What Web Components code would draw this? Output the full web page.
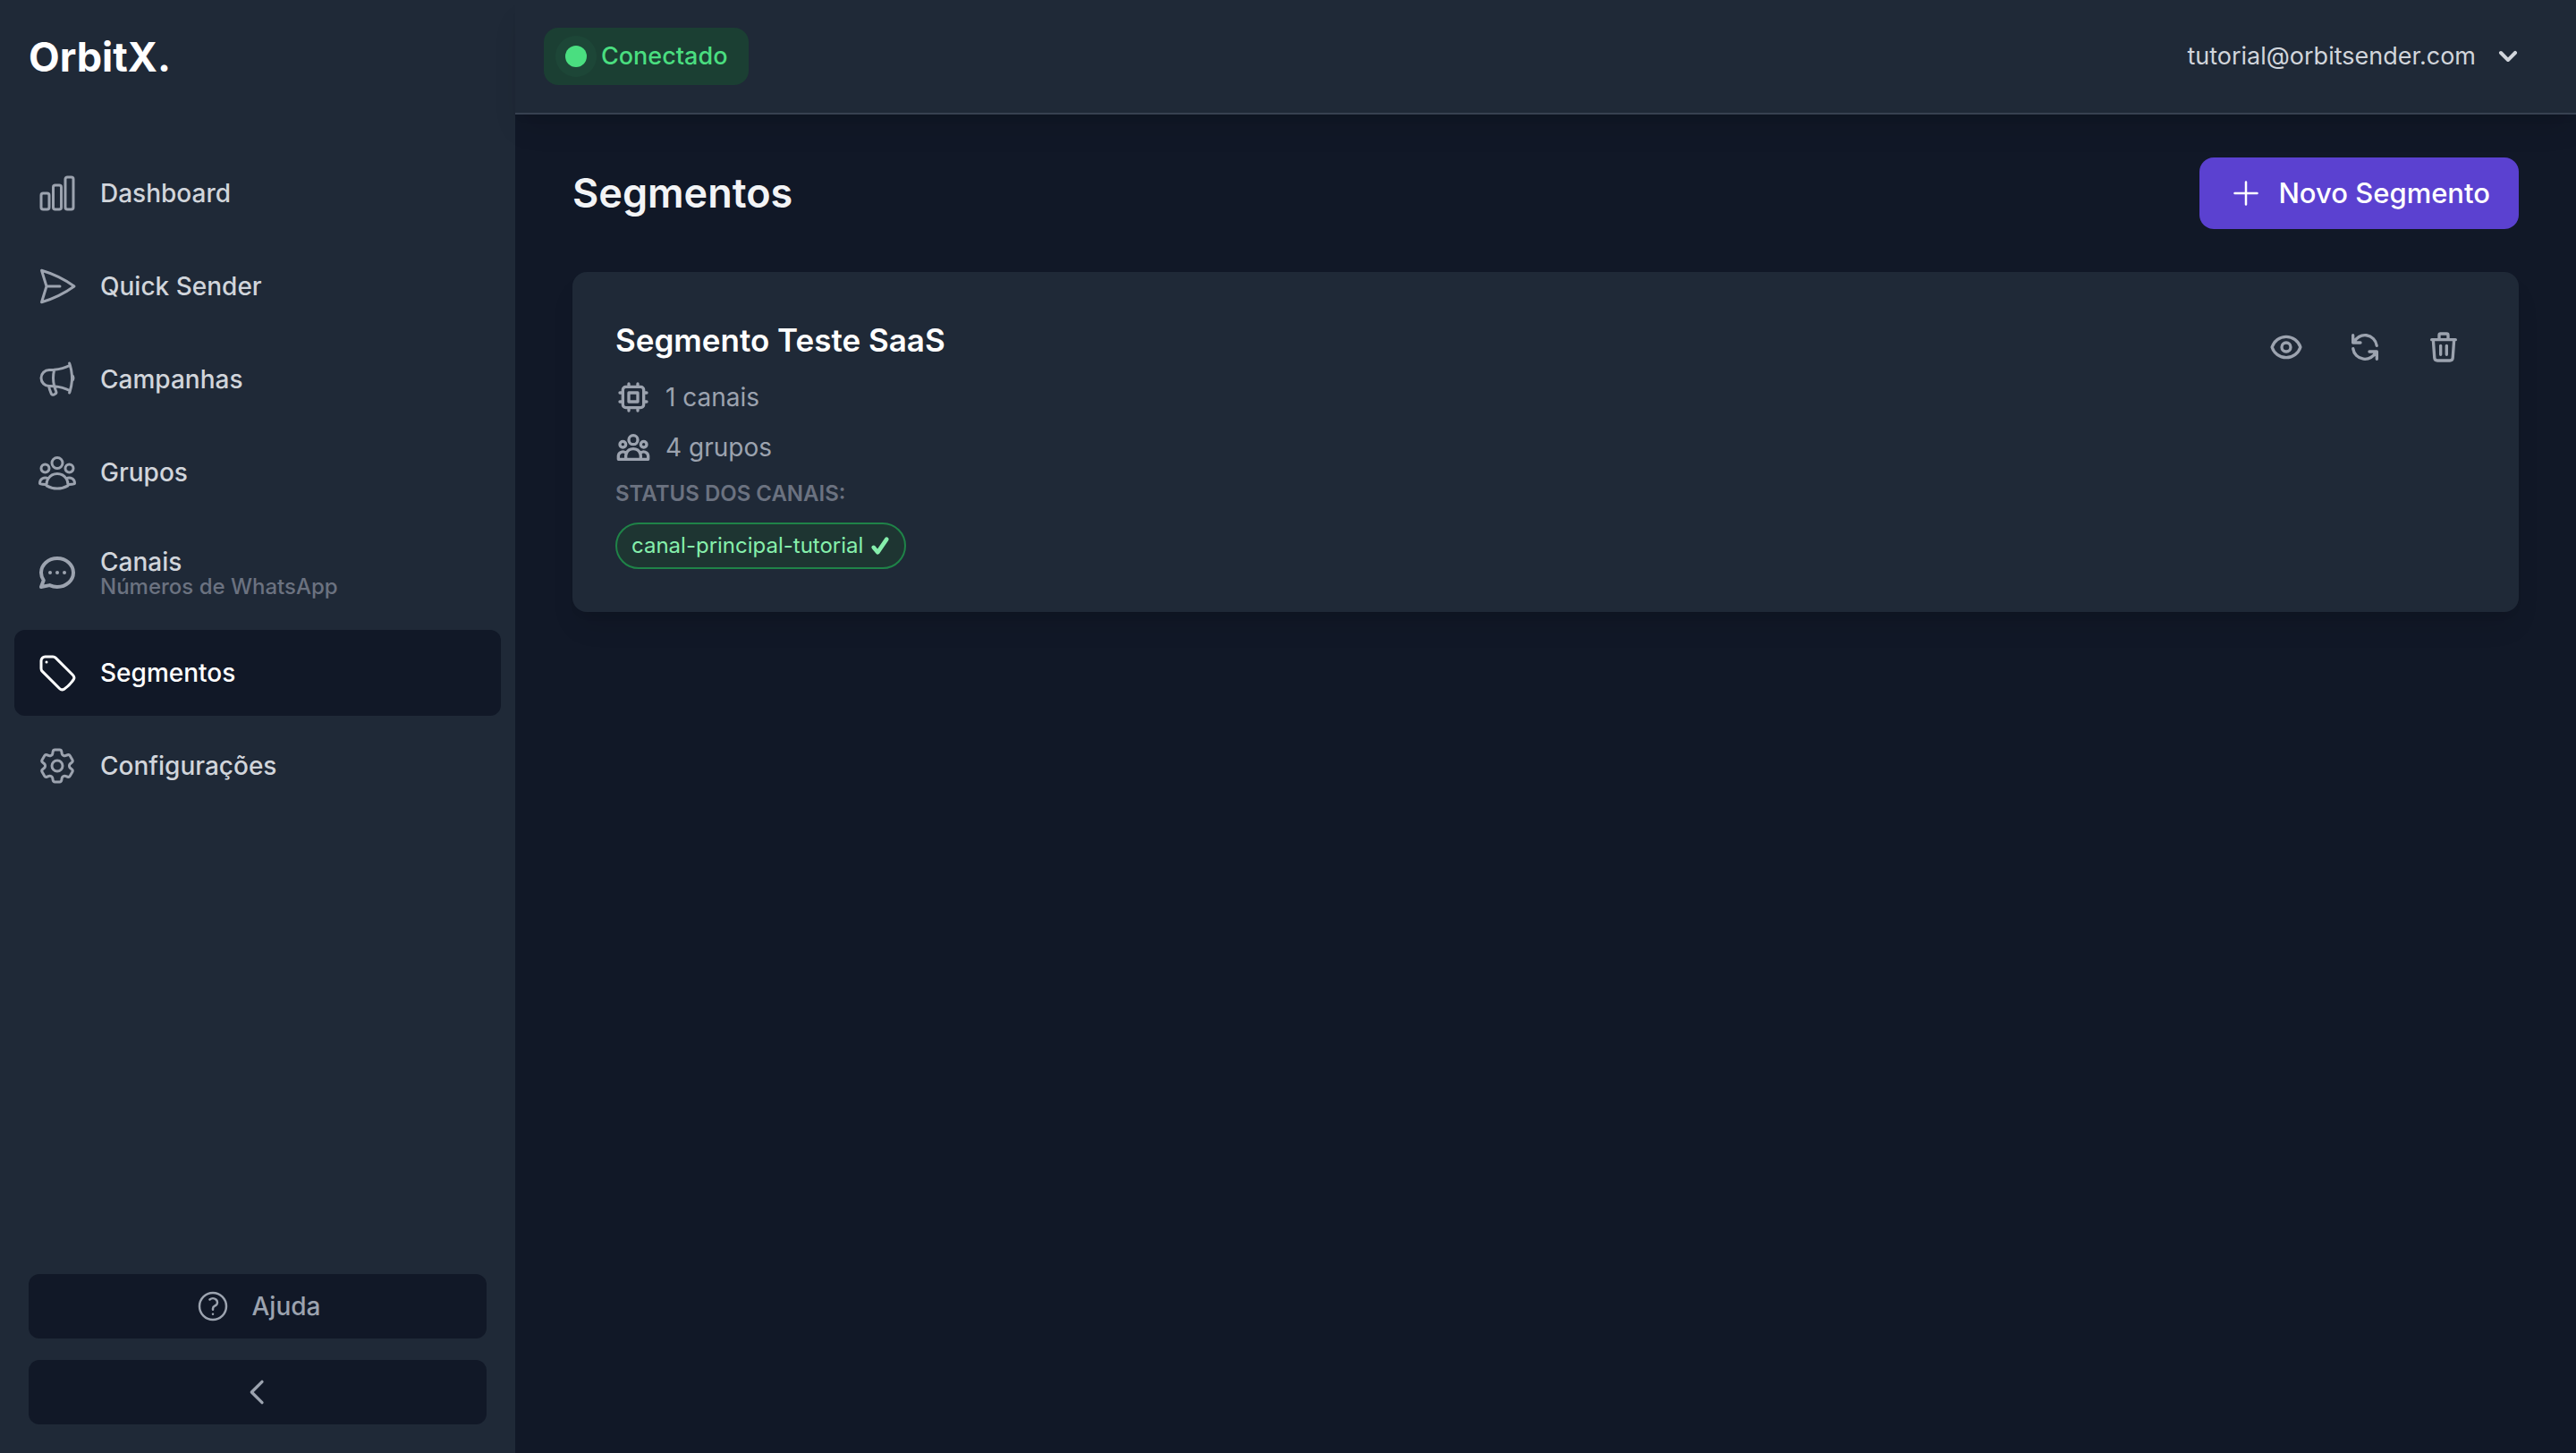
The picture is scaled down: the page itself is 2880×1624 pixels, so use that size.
<!DOCTYPE html>
<html lang="pt-BR">
<head>
<meta charset="utf-8">
<meta name="viewport" content="width=device-width, initial-scale=1">
<title>OrbitX - Segmentos</title>
<style>
  :root {
    --gray-300: #d1d5db;
    --gray-400: #9ca3af;
    --gray-500: #6b7280;
    --gray-700: #374151;
    --gray-800: #1f2937;
    --gray-900: #111827;
    --green: #4ade80;
    --purple: #5b41d0;
  }

  body {
    margin: 0;
    background: var(--gray-900);
    color: var(--gray-300);
    font: 400 28px/40px Inter, "Liberation Sans", sans-serif;
  }
</style>
</head>
<body>
<orbit-app>
  <side-bar slot="sidebar">
    <nav-item icon="chart" href="#dashboard">Dashboard</nav-item>
    <nav-item icon="send" href="#quick-sender">Quick Sender</nav-item>
    <nav-item icon="megaphone" href="#campanhas">Campanhas</nav-item>
    <nav-item icon="group" href="#grupos">Grupos</nav-item>
    <nav-item icon="chat" href="#canais" hint="Números de WhatsApp">Canais</nav-item>
    <nav-item icon="tag" href="#segmentos" active>Segmentos</nav-item>
    <nav-item icon="cog" href="#configuracoes">Configurações</nav-item>
    <side-button slot="footer" icon="help">Ajuda</side-button>
    <side-button slot="footer" icon="back" label="Recolher menu"></side-button>
  </side-bar>
  <top-bar slot="header" email="tutorial@orbitsender.com">
    <status-badge>Conectado</status-badge>
  </top-bar>
  <page-heading action="Novo Segmento">Segmentos</page-heading>
  <segment-card name="Segmento Teste SaaS">
    <info-row icon="chip">1 canais</info-row>
    <info-row icon="people">4 grupos</info-row>
    <channel-pill slot="channels">canal-principal-tutorial</channel-pill>
  </segment-card>
</orbit-app>

<script>
const ICONS = {
  chart: { width: 1.5, d: "M3 13.125C3 12.504 3.504 12 4.125 12h2.25c.621 0 1.125.504 1.125 1.125v6.75C7.5 20.496 6.996 21 6.375 21h-2.25A1.125 1.125 0 013 19.875v-6.75zM9.75 8.625c0-.621.504-1.125 1.125-1.125h2.25c.621 0 1.125.504 1.125 1.125v11.25c0 .621-.504 1.125-1.125 1.125h-2.25a1.125 1.125 0 01-1.125-1.125V8.625zM16.5 4.125c0-.621.504-1.125 1.125-1.125h2.25C20.496 3 21 3.504 21 4.125v15.75c0 .621-.504 1.125-1.125 1.125h-2.25a1.125 1.125 0 01-1.125-1.125V4.125z" },
  send: { width: 1.5, d: "M6 12L3.269 3.126A59.768 59.768 0 0121.485 12 59.77 59.77 0 013.27 20.876L5.999 12zm0 0h7.5" },
  megaphone: { width: 1.5, d: "M10.34 15.84c-.688-.06-1.386-.09-2.09-.09H7.5a4.5 4.5 0 110-9h.75c.704 0 1.402-.03 2.09-.09m0 9.18c.253.962.584 1.892.985 2.783.247.55.06 1.21-.463 1.511l-.657.38c-.551.318-1.26.117-1.527-.461a20.845 20.845 0 01-1.44-4.282m3.102.069a18.03 18.03 0 01-.59-4.59c0-1.586.205-3.124.59-4.59m0 9.18a23.848 23.848 0 018.835 2.535M10.34 6.66a23.847 23.847 0 008.835-2.535m0 0A23.74 23.74 0 0018.795 3m.38 1.125a23.91 23.91 0 011.014 5.395m-1.014 8.855c-.118.38-.245.754-.38 1.125m.38-1.125a23.91 23.91 0 001.014-5.395m0-3.46c.495.413.811 1.035.811 1.73 0 .695-.316 1.317-.811 1.73m0-3.46a24.347 24.347 0 010 3.46" },
  group: { width: 1.5, d: "M18 18.72a9.094 9.094 0 003.741-.479 3 3 0 00-4.682-2.72m.94 3.198l.001.031c0 .225-.012.447-.037.666A11.944 11.944 0 0112 21c-2.17 0-4.207-.576-5.963-1.584A6.062 6.062 0 016 18.719m12 0a5.971 5.971 0 00-.941-3.197m0 0A5.995 5.995 0 0012 12.75a5.995 5.995 0 00-5.058 2.772m0 0a3 3 0 00-4.681 2.72 8.986 8.986 0 003.74.477m.94-3.197a5.971 5.971 0 00-.94 3.197M15 6.75a3 3 0 11-6 0 3 3 0 016 0zm6 3a2.25 2.25 0 11-4.5 0 2.25 2.25 0 014.5 0zm-13.5 0a2.25 2.25 0 11-4.5 0 2.25 2.25 0 014.5 0z" },
  chat: { width: 2, d: "M8 12h.01M12 12h.01M16 12h.01M21 12c0 4.418-4.03 8-9 8a9.863 9.863 0 01-4.255-.949L3 20l1.395-3.72C3.512 15.042 3 13.574 3 12c0-4.418 4.03-8 9-8s9 3.582 9 8z" },
  tag: { width: 1.5, d: "M9.568 3H5.25A2.25 2.25 0 003 5.25v4.318c0 .597.237 1.17.659 1.591l9.581 9.581c.699.699 1.78.872 2.607.33a18.095 18.095 0 005.223-5.223c.542-.827.369-1.908-.33-2.607L11.16 3.66A2.25 2.25 0 009.568 3zM6 6h.008v.008H6V6z" },
  cog: { width: 1.5, d: "M9.594 3.94c.09-.542.56-.94 1.11-.94h2.593c.55 0 1.02.398 1.11.94l.213 1.281c.063.374.313.686.645.87.074.04.147.083.22.127.324.196.72.257 1.075.124l1.217-.456a1.125 1.125 0 011.37.49l1.296 2.247a1.125 1.125 0 01-.26 1.431l-1.003.827c-.293.24-.438.613-.431.992a6.759 6.759 0 010 .255c-.007.378.138.75.43.99l1.005.828c.424.35.534.954.26 1.43l-1.298 2.247a1.125 1.125 0 01-1.369.491l-1.217-.456c-.355-.133-.75-.072-1.076.124a6.57 6.57 0 01-.22.128c-.331.183-.581.495-.644.869l-.213 1.28c-.09.543-.56.941-1.11.941h-2.594c-.55 0-1.02-.398-1.11-.94l-.213-1.281c-.062-.374-.312-.686-.644-.87a6.52 6.52 0 01-.22-.127c-.325-.196-.72-.257-1.076-.124l-1.217.456a1.125 1.125 0 01-1.369-.49l-1.297-2.247a1.125 1.125 0 01.26-1.431l1.004-.827c.292-.24.437-.613.43-.992a6.932 6.932 0 010-.255c.007-.378-.138-.75-.43-.99l-1.004-.828a1.125 1.125 0 01-.26-1.43l1.297-2.247a1.125 1.125 0 011.37-.491l1.216.456c.356.133.751.072 1.076-.124.072-.044.146-.087.22-.128.332-.183.582-.495.644-.869l.214-1.281zM15 12a3 3 0 11-6 0 3 3 0 016 0z" },
  help: { width: 1.5, d: "M9.879 7.519c1.171-1.025 3.071-1.025 4.242 0 1.172 1.025 1.172 2.687 0 3.712-.203.179-.43.326-.67.442-.745.361-1.45.999-1.45 1.827v.75M21 12a9 9 0 11-18 0 9 9 0 0118 0zm-9 5.25h.008v.008H12v-.008z" },
  back: { width: 2, d: "M15 19l-7-7 7-7" },
  plus: { width: 1.5, d: "M12 4.5v15m7.5-7.5h-15" },
  chip: { width: 2, d: "M9 3v2m6-2v2M9 19v2m6-2v2M5 9H3m2 6H3m18-6h-2m2 6h-2M7 19h10a2 2 0 002-2V7a2 2 0 00-2-2H7a2 2 0 00-2 2v10a2 2 0 002 2zM9 9h6v6H9V9z" },
  people: { width: 2, d: "M17 20h5v-2a3 3 0 00-5.356-1.857M17 20H7m10 0v-2c0-.656-.126-1.283-.356-1.857M7 20H2v-2a3 3 0 015.356-1.857M7 20v-2c0-.656.126-1.283.356-1.857m0 0a5.002 5.002 0 019.288 0M15 7a3 3 0 11-6 0 3 3 0 016 0zm6 3a2 2 0 11-4 0 2 2 0 014 0zM7 10a2 2 0 11-4 0 2 2 0 014 0z" },
  eye: { width: 2, d: "M15 12a3 3 0 11-6 0 3 3 0 016 0zM2.458 12C3.732 7.943 7.523 5 12 5c4.478 0 8.268 2.943 9.542 7-1.274 4.057-5.064 7-9.542 7-4.477 0-8.268-2.943-9.542-7z" },
  refresh: { width: 2, d: "M4 4v5h.582m15.356 2A8.001 8.001 0 004.582 9m0 0H9m11 11v-5h-.581m0 0a8.003 8.003 0 01-15.357-2m15.357 2H15" },
  trash: { width: 2, d: "M19 7l-.867 12.142A2 2 0 0116.138 21H7.862a2 2 0 01-1.995-1.858L5 7m5 4v6m4-6v6m1-10V4a1 1 0 00-1-1h-4a1 1 0 00-1 1v3M4 7h16" },
  check: { width: 5, d: "M4 14l5 6L20 4" },
  down: { solid: true, box: 20, d: "M5.293 7.293a1 1 0 011.414 0L10 10.586l3.293-3.293a1 1 0 111.414 1.414l-4 4a1 1 0 01-1.414 0l-4-4a1 1 0 010-1.414z" }
};

class BaseElement extends HTMLElement {
  constructor() {
    super();
    this.attachShadow({ mode: "open" });
  }

  connectedCallback() {
    this.shadowRoot.innerHTML = `
      <style>
        * { box-sizing: border-box; }
        button { margin: 0; border: 0; font: inherit; color: inherit; cursor: pointer; }
        ${this.styles}
      </style>
      ${this.render()}
    `;
  }
}

class OrbitIcon extends BaseElement {
  get styles() {
    return `
      :host { display: block; flex: none; width: var(--icon-size, 40px); height: var(--icon-size, 40px); }
      svg { display: block; width: 100%; height: 100%; }
    `;
  }

  render() {
    const { width, d, solid, box = 24 } = ICONS[this.getAttribute("name")];
    const paint = solid
      ? `fill="currentColor"`
      : `fill="none" stroke="currentColor" stroke-width="${width}" stroke-linecap="round" stroke-linejoin="round"`;
    return `<svg viewBox="0 0 ${box} ${box}" ${paint} aria-hidden="true"><path d="${d}"/></svg>`;
  }
}

class OrbitApp extends BaseElement {
  get styles() {
    return `
      :host { display: grid; grid-template-columns: 576px 1fr; min-height: 100vh; }
      .content { display: flex; flex-direction: column; min-width: 0; }
      main { display: flex; flex-direction: column; gap: 48px; padding: 48px 64px; }
    `;
  }

  render() {
    return `
      <slot name="sidebar"></slot>
      <div class="content">
        <slot name="header"></slot>
        <main><slot></slot></main>
      </div>
    `;
  }
}

class SideBar extends BaseElement {
  get styles() {
    return `
      :host { display: flex; flex-direction: column; background: var(--gray-800); }
      .logo { display: flex; align-items: center; height: 128px; padding: 0 32px; color: #fff; font-size: 45px; font-weight: 700; text-decoration: none; }
      nav { display: flex; flex-direction: column; gap: 8px; padding: 40px 16px; }
      footer { display: flex; flex-direction: column; gap: 24px; margin-top: auto; padding: 32px; }
    `;
  }

  render() {
    return `
      <a class="logo" href="#">OrbitX.</a>
      <nav><slot></slot></nav>
      <footer><slot name="footer"></slot></footer>
    `;
  }
}

class NavItem extends BaseElement {
  get styles() {
    return `
      :host { display: block; }
      a { display: flex; align-items: center; gap: 24px; padding: 24px; border-radius: 12px; color: var(--gray-300); font-weight: 500; text-decoration: none; }
      orbit-icon { --icon-size: 48px; color: var(--gray-400); }
      .text { display: flex; flex-direction: column; }
      .hinted { padding: 4px 0; line-height: 32px; }
      small { color: var(--gray-500); font-size: 24px; line-height: 24px; }
      :host([active]) a { background: var(--gray-900); color: #fff; }
      :host([active]) orbit-icon { color: #fff; }
    `;
  }

  render() {
    const hint = this.getAttribute("hint");
    return `
      <a href="${this.getAttribute("href")}">
        <orbit-icon name="${this.getAttribute("icon")}"></orbit-icon>
        <span class="text ${hint ? "hinted" : ""}">
          <span><slot></slot></span>
          ${hint ? `<small>${hint}</small>` : ""}
        </span>
      </a>
    `;
  }
}

class SideButton extends BaseElement {
  get styles() {
    return `
      :host { display: block; }
      button { display: flex; align-items: center; justify-content: center; gap: 24px; width: 100%; padding: 16px; border-radius: 12px; background: var(--gray-900); color: var(--gray-400); font-weight: 500; }
    `;
  }

  render() {
    const label = this.getAttribute("label");
    return `
      <button type="button" ${label ? `aria-label="${label}"` : ""}>
        <orbit-icon name="${this.getAttribute("icon")}"></orbit-icon>
        ${label ? "" : `<span><slot></slot></span>`}
      </button>
    `;
  }
}

class TopBar extends BaseElement {
  get styles() {
    return `
      :host { display: flex; align-items: center; justify-content: space-between; height: 128px; padding: 0 32px; box-sizing: border-box; background: var(--gray-800); border-bottom: 2px solid var(--gray-700); box-shadow: 0 20px 30px -6px rgba(0, 0, 0, .1), 0 8px 12px -8px rgba(0, 0, 0, .1); }
      button { display: flex; align-items: center; gap: 16px; padding: 12px 24px; background: none; font-size: 27px; }
    `;
  }

  render() {
    return `
      <slot></slot>
      <button type="button">${this.getAttribute("email")} <orbit-icon name="down"></orbit-icon></button>
    `;
  }
}

class StatusBadge extends BaseElement {
  get styles() {
    return `
      :host { display: flex; align-items: center; gap: 16px; padding: 12px 24px; border-radius: 16px; background: #1b3f33; color: var(--green); font-size: 27px; font-weight: 500; }
      i { width: 24px; height: 24px; border-radius: 50%; background: var(--green); box-shadow: 0 0 0 11px rgba(74, 222, 128, .05); }
    `;
  }

  render() {
    return `<i></i><span><slot></slot></span>`;
  }
}

class PageHeading extends BaseElement {
  get styles() {
    return `
      :host { display: flex; align-items: center; justify-content: space-between; }
      h1 { margin: 0; color: #f3f4f6; font-size: 45px; line-height: 64px; font-weight: 600; }
      button { display: flex; align-items: center; gap: 16px; padding: 20px 32px; border-radius: 16px; background: var(--purple); color: #fff; font-size: 31px; font-weight: 500; }
    `;
  }

  render() {
    return `
      <h1><slot></slot></h1>
      <button type="button"><orbit-icon name="plus"></orbit-icon>${this.getAttribute("action")}</button>
    `;
  }
}

class SegmentCard extends BaseElement {
  get styles() {
    return `
      :host { display: flex; align-items: flex-start; justify-content: space-between; padding: 48px; border-radius: 16px; background: var(--gray-800); box-shadow: 0 20px 30px -6px rgba(0, 0, 0, .1), 0 8px 12px -8px rgba(0, 0, 0, .1); }
      .info { display: flex; flex-direction: column; align-items: flex-start; gap: 16px; }
      h2 { margin: 0; color: #fff; font-size: 35px; line-height: 56px; font-weight: 600; }
      h3 { margin: 0; color: var(--gray-500); font-size: 24px; line-height: 32px; font-weight: 600; text-transform: uppercase; }
      .actions { display: flex; gap: 16px; }
      .actions button { padding: 16px; background: none; color: var(--gray-400); }
    `;
  }

  render() {
    return `
      <div class="info">
        <h2>${this.getAttribute("name")}</h2>
        <slot></slot>
        <h3>Status dos canais:</h3>
        <slot name="channels"></slot>
      </div>
      <div class="actions">
        <button type="button" aria-label="Ver"><orbit-icon name="eye"></orbit-icon></button>
        <button type="button" aria-label="Atualizar"><orbit-icon name="refresh"></orbit-icon></button>
        <button type="button" aria-label="Excluir"><orbit-icon name="trash"></orbit-icon></button>
      </div>
    `;
  }
}

class InfoRow extends BaseElement {
  get styles() {
    return `:host { display: flex; align-items: center; gap: 16px; color: var(--gray-400); }`;
  }

  render() {
    return `<orbit-icon name="${this.getAttribute("icon")}"></orbit-icon><span><slot></slot></span>`;
  }
}

class ChannelPill extends BaseElement {
  get styles() {
    return `
      :host { display: flex; align-items: center; gap: 8px; padding: 8px 16px; border: 2px solid #1f8348; border-radius: 26px; background: #1e3532; color: #86efac; font-size: 24px; line-height: 32px; }
      orbit-icon { --icon-size: 22px; }
    `;
  }

  render() {
    return `<span><slot></slot></span><orbit-icon name="check"></orbit-icon>`;
  }
}

customElements.define("orbit-icon", OrbitIcon);
customElements.define("orbit-app", OrbitApp);
customElements.define("side-bar", SideBar);
customElements.define("nav-item", NavItem);
customElements.define("side-button", SideButton);
customElements.define("top-bar", TopBar);
customElements.define("status-badge", StatusBadge);
customElements.define("page-heading", PageHeading);
customElements.define("segment-card", SegmentCard);
customElements.define("info-row", InfoRow);
customElements.define("channel-pill", ChannelPill);
</script>
</body>
</html>
